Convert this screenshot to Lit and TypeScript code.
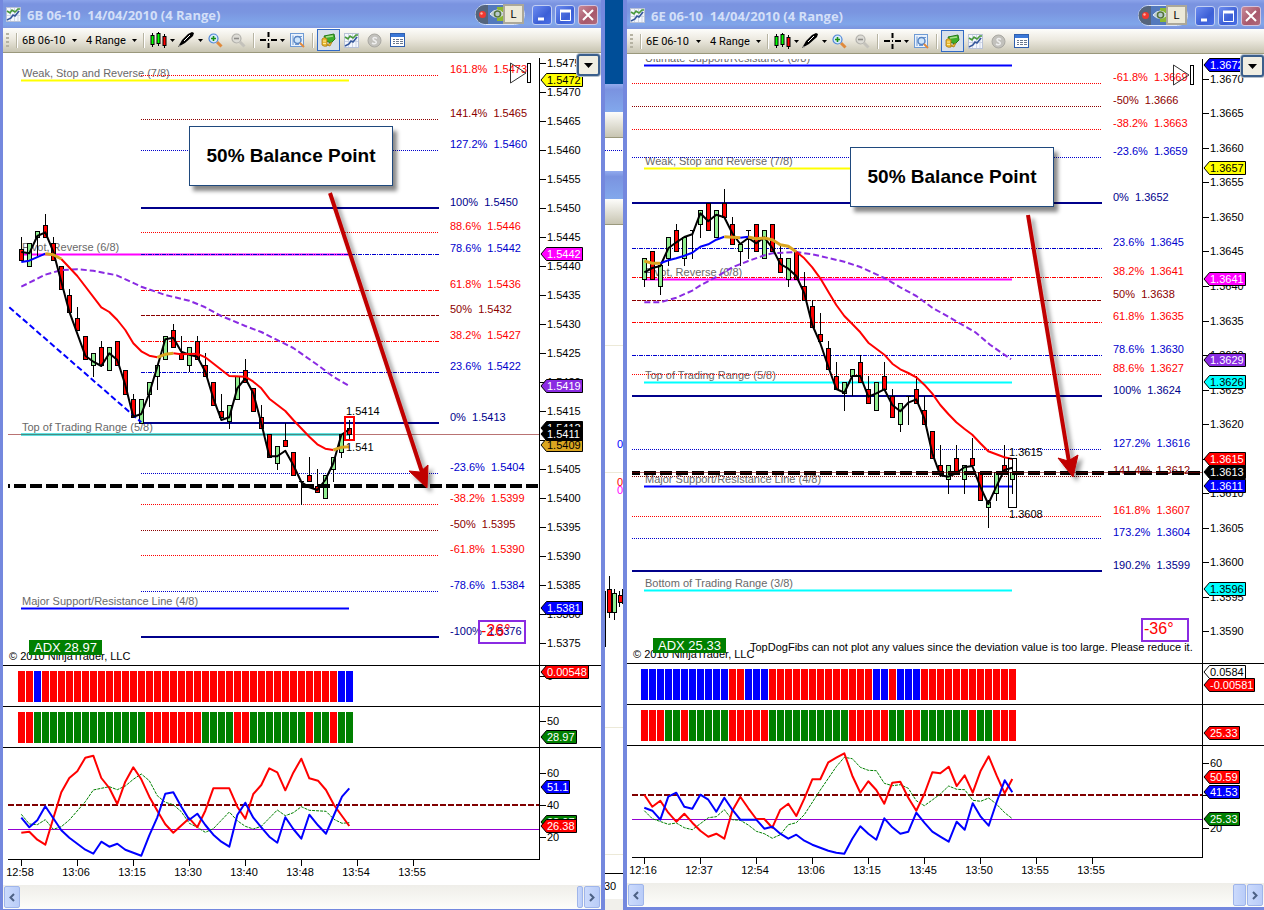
import { LitElement, html, svg, css, nothing, type SVGTemplateResult } from "lit";
import { customElement, property } from "lit/decorators.js";
import { styleMap } from "lit/directives/style-map.js";

type Pt = [number, number];
/** x, high, body top, body bottom, low, kind: g = up, r = down, d = doji */
type Candle = [number, number, number, number, number, "g" | "r" | "d"];
/** y, text, line style, colour */
type Level = [number, string, "dot" | "dashdot" | "dash" | "solid", string];
/** y, text, colour */
type Zone = [number, string, string];
/** y, text, fill, ink */
type Tag = [number, string, string, string];
type Tick = [number, string];
/** colour, points, kind */
type Curve = [string, Pt[], "line" | "thick" | "dashed" | "fine"];

interface Market {
  symbol: string;
  title: string;
  /** left edge of the chart and top of the price pane, in chart space */
  origin: Pt;
  split: [number, number, number, number, number];
  /** origin of the samples, which are recorded at three units a pixel */
  sample: Pt;
  oscSample: Pt;
  levelsFrom: number;
  levelsTo: number;
  labelsAt: number;
  levels: Level[];
  zonesFrom: number;
  zonesTo: number;
  zones: Zone[];
  candles: Candle[];
  curves: Curve[];
  extras: SVGTemplateResult;
  overlay: SVGTemplateResult;
  ticks: Tick[];
  tags: Tag[];
  barsFrom: number;
  trend: string;
  power: string;
  trendTicks: Tick[];
  trendTags: Tag[];
  powerTicks: Tick[];
  powerTags: Tag[];
  osc: Curve[];
  upper: number;
  lower: number;
  oscTicks: Tick[];
  oscTags: Tag[];
  timesAt: number;
  times: string[];
  adx: string;
  adxAt: Pt;
  angle: string;
  angleAt: Pt;
  note: string;
  noteAt: Pt;
  callout: Pt;
  arrow: string;
  arrowHead: string;
  skipAt: Pt;
}

const pts = (...n: number[]): Pt[] => {
  const out: Pt[] = [];
  for (let i = 0; i < n.length; i += 2) out.push([n[i], n[i + 1]]);
  return out;
};

const RED = "#ff0000";
const GOLD = "#daa520";
const NAVY = "#00008b";
const BLUE = "#0000ff";
const MIDBLUE = "#0000cd";
const MAROON = "#8b0000";
const VIOLET = "#8a2be2";
const GREEN = "#008000";

const priceTicks = (first: number, step: number, count: number, y0: number, dy: number): Tick[] =>
  Array.from({ length: count }, (_, i) => [Math.floor(y0 + i * dy), ((first - i * step) / 10000).toFixed(4)]);

const pound: Market = {
  symbol: "6B 06-10",
  title: "6B 06-10\u00a0\u00a014/04/2010 (4 Range)",
  origin: [3, 53],
  split: [53, 666, 707, 748, 860],
  sample: [0, 190],
  oscSample: [0, 570],
  levelsFrom: 141,
  levelsTo: 439,
  labelsAt: 450,
  levels: [
    [75, "161.8%  1.5473", "dot", RED],
    [119, "141.4%  1.5465", "dot", MAROON],
    [150, "127.2%  1.5460", "dot", MIDBLUE],
    [208, "100%  1.5450", "solid", NAVY],
    [232, "88.6%  1.5446", "dot", RED],
    [254, "78.6%  1.5442", "dashdot", MIDBLUE],
    [290, "61.8%  1.5436", "dashdot", RED],
    [315, "50%  1.5432", "dash", MAROON],
    [341, "38.2%  1.5427", "dashdot", RED],
    [372, "23.6%  1.5422", "dashdot", MIDBLUE],
    [423, "0%  1.5413", "solid", NAVY],
    [473, "-23.6%  1.5404", "dot", MIDBLUE],
    [504, "-38.2%  1.5399", "dot", RED],
    [530, "-50%  1.5395", "dot", MAROON],
    [555, "-61.8%  1.5390", "dot", RED],
    [591, "-78.6%  1.5384", "dot", MIDBLUE],
    [637, "-100%  1.5376", "solid", NAVY],
  ],
  zonesFrom: 21,
  zonesTo: 349,
  zones: [
    [80, "Weak, Stop and Reverse (7/8)", "#ffff00"],
    [254, "Pivot, Reverse (6/8)", "#ff00ff"],
    [434, "Top of Trading Range (5/8)", "#40e0e0"],
    [608, "Major Support/Resistance Line (4/8)", BLUE],
  ],
  candles: [
    [64, 141, 178, 212, 212, "r"], [88, 160, 160, 230, 230, "g"], [112, 124, 124, 142, 195, "g"], [136, 72, 106, 142, 142, "r"],
    [160, 142, 160, 212, 212, "r"], [184, 229, 229, 298, 298, "r"], [208, 297, 316, 368, 368, "r"], [232, 351, 385, 422, 422, "r"],
    [256, 439, 439, 508, 508, "r"], [280, 490, 490, 526, 560, "g"], [304, 453, 472, 526, 526, "r"], [328, 472, 472, 542, 542, "g"],
    [352, 454, 454, 526, 526, "r"], [376, 541, 541, 613, 613, "r"], [400, 612, 628, 682, 682, "r"], [424, 628, 628, 700, 700, "g"],
    [448, 577, 577, 613, 648, "g"], [472, 526, 526, 560, 597, "g"], [496, 439, 439, 508, 508, "g"], [520, 402, 421, 472, 472, "r"],
    [544, 438, 490, 508, 508, "r"], [568, 472, 472, 526, 543, "g"], [592, 438, 454, 508, 508, "r"], [616, 490, 526, 560, 560, "r"],
    [640, 577, 577, 647, 647, "r"], [664, 612, 664, 682, 682, "r"], [688, 646, 646, 694, 716, "g"], [712, 560, 560, 628, 628, "g"],
    [736, 507, 541, 577, 577, "r"], [760, 595, 595, 664, 664, "r"], [784, 646, 682, 716, 716, "r"], [808, 733, 733, 802, 802, "r"],
    [832, 769, 769, 820, 838, "g"], [856, 700, 751, 769, 769, "r"], [880, 787, 787, 856, 856, "r"], [904, 874, 874, 874, 942, "d"],
    [928, 801, 856, 874, 874, "r"], [952, 838, 889, 907, 907, "r"], [976, 856, 856, 925, 925, "g"], [1000, 802, 802, 838, 874, "g"],
    [1024, 733, 733, 787, 802, "g"], [1048, 690, 715, 733, 748, "r"],
  ],
  curves: [
    [VIOLET, pts(64, 290, 136, 254, 184, 240, 232, 238, 280, 242, 350, 256, 424, 290, 496, 315, 568, 332, 612, 350, 664, 378, 736, 408, 784, 426, 880, 474, 952, 524, 1000, 560, 1048, 588), "dashed"],
    [BLUE, pts(28, 352, 424, 697), "dashed"],
    ["#000000", pts(64, 186, 88, 190, 112, 138, 136, 127, 160, 185, 184, 275, 208, 365, 256, 497, 280, 515, 304, 528, 328, 490, 352, 510, 376, 585, 400, 680, 424, 672, 448, 610, 472, 530, 496, 448, 520, 443, 544, 485, 568, 494, 592, 500, 616, 545, 640, 625, 664, 690, 688, 682, 712, 595, 736, 565, 760, 610, 784, 700, 808, 799, 832, 799, 856, 782, 880, 825, 904, 876, 928, 892, 952, 900, 976, 870, 1000, 820, 1024, 735, 1048, 718), "line"],
    [BLUE, pts(64, 216, 88, 212, 136, 191), "line"],
    [RED, pts(184, 207, 232, 258, 304, 352, 328, 366, 352, 390, 376, 420, 400, 460, 424, 484, 448, 497, 472, 502), "line"],
    [RED, pts(520, 490, 544, 493, 592, 491, 616, 502, 688, 558, 736, 560, 760, 575, 784, 595, 808, 626, 856, 663, 880, 690, 928, 740, 952, 763, 976, 776, 1000, 780), "line"],
    [GOLD, pts(136, 191, 160, 194, 184, 207), "thick"],
    [GOLD, pts(472, 502, 496, 493, 520, 490), "thick"],
    [GOLD, pts(1000, 780, 1024, 772, 1048, 770), "thick"],
  ],
  extras: svg`<path d="M8 434.5H900" stroke="#800000" stroke-opacity=".55"/>
    <path d="M21 434.5H349" stroke="#60e0e0" stroke-width="3"/><path d="M21 434.5H349" stroke="#4a8a80"/>`,
  overlay: svg`
    <rect x="345" y="417" width="9" height="23" fill="none" stroke="#ff0000" stroke-width="2"/>
    <text x="346" y="415">1.5414</text><text x="346" y="451">1.541</text>
    <path d="M8 486H900" stroke="#000" stroke-width="4" stroke-dasharray="12 4" stroke-dashoffset="10"/>`,
  ticks: priceTicks(15475, 5, 21, 63.5, 29),
  tags: [
    [80, "1.5472", "#ffff00", "#000"],
    [254, "1.5442", "#ff00ff", "#fff"],
    [386, "1.5419", VIOLET, "#fff"],
    [445, "1.5409", GOLD, "#000"],
    [428, "1.5412", "#000", "#fff"],
    [434, "1.5411", "#000", "#fff"],
    [608, "1.5381", BLUE, "#fff"],
  ],
  barsFrom: 18,
  trend: "rrb" + "r".repeat(37) + "bb",
  power: "rr" + "g".repeat(14) + "r".repeat(7) + "ggggrr" + "g".repeat(7) + "rggrgg",
  trendTicks: [[676, "0"]],
  trendTags: [[672, "0.00548", RED, "#fff"]],
  powerTicks: [[721, "50"]],
  powerTags: [[737, "28.97", GREEN, "#fff"]],
  osc: [
    [GREEN, pts(64, 733, 88, 762, 112, 764, 136, 749, 160, 778, 184, 770, 208, 750, 256, 695, 280, 660, 304, 655, 328, 650, 352, 659, 376, 648, 400, 628, 424, 612, 448, 632, 472, 677, 496, 697, 520, 704, 544, 725, 568, 760, 592, 772, 616, 787, 640, 776, 688, 726, 712, 752, 736, 769, 760, 777, 784, 769, 832, 720, 856, 737, 880, 728, 904, 710, 928, 721, 978, 724, 1002, 748, 1026, 760, 1048, 758), "fine"],
    [RED, pts(64, 788, 88, 785, 112, 809, 136, 824, 160, 745, 184, 667, 208, 624, 232, 604, 256, 563, 280, 557, 304, 624, 328, 654, 352, 702, 376, 635, 400, 592, 424, 628, 448, 680, 472, 722, 496, 763, 520, 788, 568, 745, 592, 772, 616, 722, 640, 655, 688, 655, 712, 710, 736, 746, 760, 672, 784, 645, 808, 595, 832, 607, 856, 661, 880, 608, 904, 566, 928, 625, 954, 632, 978, 660, 1002, 705, 1026, 738, 1048, 768), "line"],
    [BLUE, pts(64, 743, 88, 772, 112, 751, 136, 709, 160, 745, 184, 781, 208, 803, 232, 821, 256, 839, 280, 851, 304, 815, 328, 830, 352, 821, 376, 839, 400, 848, 424, 857, 448, 796, 472, 742, 496, 671, 520, 667, 544, 710, 568, 749, 592, 731, 616, 765, 640, 794, 664, 815, 688, 830, 712, 735, 736, 698, 760, 743, 784, 772, 808, 800, 832, 818, 856, 742, 880, 777, 904, 806, 928, 734, 954, 766, 978, 791, 1002, 735, 1026, 680, 1048, 655), "line"],
  ],
  upper: 805,
  lower: 829.5,
  oscTicks: [[773, "60"], [805, "40"], [837, "20"]],
  oscTags: [
    [787, "51.1", BLUE, "#fff"],
    [822, "28.97", GREEN, "#fff"],
    [826, "26.38", RED, "#fff"],
  ],
  timesAt: 21,
  times: ["12:58", "13:06", "13:15", "13:30", "13:40", "13:48", "13:54", "13:55"],
  adx: "ADX 28.97",
  adxAt: [29, 640],
  angle: "-26°",
  angleAt: [479, 621],
  note: "",
  noteAt: [0, 0],
  callout: [189, 126],
  arrow: "M330 193L422 472",
  arrowHead: "M427 488L409 471L420 472L428 465Z",
  skipAt: [510, 63],
};

/** vertical shift of the later samples of the euro series */
const Z = 510;
const euro: Market = {
  symbol: "6E 06-10",
  title: "6E 06-10\u00a0\u00a014/04/2010 (4 Range)",
  origin: [627, 54],
  split: [54, 664, 705, 746, 858],
  sample: [620, 170],
  oscSample: [620, 570],
  levelsFrom: 632,
  levelsTo: 1102,
  labelsAt: 1113,
  levels: [
    [83, "-61.8%  1.3669", "dot", RED],
    [106, "-50%  1.3666", "dot", MAROON],
    [129, "-38.2%  1.3663", "dot", RED],
    [157, "-23.6%  1.3659", "dot", MIDBLUE],
    [203, "0%  1.3652", "solid", NAVY],
    [248, "23.6%  1.3645", "dashdot", MIDBLUE],
    [277, "38.2%  1.3641", "dashdot", RED],
    [300, "50%  1.3638", "dash", MAROON],
    [322, "61.8%  1.3635", "dashdot", RED],
    [355, "78.6%  1.3630", "dashdot", MIDBLUE],
    [374, "88.6%  1.3627", "dot", RED],
    [396, "100%  1.3624", "solid", NAVY],
    [449, "127.2%  1.3616", "dot", MIDBLUE],
    [476, "141.4%  1.3612", "dot", MAROON],
    [516, "161.8%  1.3607", "dot", RED],
    [538, "173.2%  1.3604", "dot", MIDBLUE],
    [571, "190.2%  1.3599", "solid", NAVY],
  ],
  zonesFrom: 644,
  zonesTo: 1012,
  zones: [
    [65, "Ultimate Support/Resistance (8/8)", BLUE],
    [168, "Weak, Stop and Reverse (7/8)", "#ffff00"],
    [279, "Pivot, Reverse (6/8)", "#ff00ff"],
    [382, "Top of Trading Range (5/8)", "#00ffff"],
    [486, "Major Support/Resistance Line (4/8)", BLUE],
    [590, "Bottom of Trading Range (3/8)", "#00ffff"],
  ],
  candles: [
    [73, 265, 265, 328, 350, "g"], [97, 244, 244, 328, 328, "r"], [121, 286, 286, 349, 372, "g"], [145, 202, 202, 265, 287, "g"],
    [169, 162, 181, 244, 244, "r"], [193, 202, 202, 265, 287, "g"], [217, 181, 181, 181, 265, "d"], [241, 121, 121, 163, 203, "g"],
    [265, 100, 100, 181, 181, "r"], [289, 121, 121, 202, 202, "g"], [313, 57, 100, 142, 142, "r"], [337, 141, 163, 223, 223, "r"],
    [361, 223, 223, 244, 285, "g"], [385, 181, 181, 181, 266, "d"], [409, 163, 163, 244, 244, "r"], [433, 181, 181, 265, 265, "g"],
    [457, 163, 163, 244, 244, "r"], [481, 230, 265, 307, 307, "r"], [505, 265, 265, 328, 350, "g"], [529, 246, 246, 328, 328, "r"],
    [553, 307, 349, 391, 391, "r"], [577, 392, 409, 472, 472, "r"], [601, 430, 493, 514, 514, "r"], [625, 514, 535, 598, 598, "r"],
    [649, 577, 619, 658, 658, "r"], [673, 637, 637, 670, 722, "g"], [697, 598, 598, 619, 676, "g"], [721, 556, 577, 637, 637, "r"],
    [745, 618, 658, 700, 700, "r"], [769, 637, 637, 721, 721, "g"], [793, 577, 619, 658, 658, "r"], [817, 658, 679, 742, 742, "r"],
    [841, 700, 700, 763, 784, "g"], [865, 679, 679, 679, 763, "d"], [889, 618, 658, 700, 700, "r"], [913, 679, 721, 763, 763, "r"],
    [937, 784, 784, 865, 865, "r"], [961, 826, 886, 907, 918, "r"], [985, 886, 886, 928, 971, "g"], [1009, 826, 865, 907, 907, "r"],
    [1033, 886, 886, 928, 971, "g"], [1057, 804, 865, 886, 886, "r"], [1081, 907, 907, 991, 991, "r"], [1105, 990, 997, 1012, 1072, "g"],
    [1129, 907, 907, 970, 992, "g"], [1153, 826, 886, 910, 910, "r"], [1177, 865, 907, 928, 970, "g"],
  ],
  curves: [
    [VIOLET, pts(73, 397, 121, 397, 169, 383, 217, 362, 241, 346, 289, 321, 337, 292, 385, 273, 433, 256, 457, 250, 529, 246, 577, 253, 625, 264, 673, 275, 721, 291, 793, 324, 841, 352, 889, 378, 937, 413, 1009, 454, 1065, 486, 1110, 524, 1173, 568), "dashed"],
    ["#000000", pts(73, 307, 97, 294, 121, 288, 145, 235, 169, 217, 193, 201, 217, 193, 241, 130, 265, 154, 289, 134, 313, 142, 337, 190, 361, 222, 385, 204, 409, 220, 433, 202, 457, 234, 481, 282, 505, 296, 529, 318, 553, 370, 577, 465, 601, 520, 625, 590, 649, 657, 673, 668, 697, 618, 721, 618, 745, 680, 769, 670, 793, 658, 817, Z + 195, 841, Z + 214, 865, Z + 188, 889, Z + 178, 913, Z + 235, 937, Z + 340, 961, Z + 406, 985, Z + 410, 1009, Z + 400, 1033, Z + 382, 1057, Z + 378, 1081, Z + 440, 1105, Z + 492, 1129, Z + 440, 1153, Z + 390, 1177, Z + 383), "line"],
    [BLUE, pts(121, 280, 145, 271, 169, 265, 193, 257, 217, 248, 241, 230, 265, 223, 289, 209, 313, 200), "line"],
    [RED, pts(529, 245, 553, 265, 577, 292, 601, 325, 625, 365, 649, 405, 673, 438, 697, 462, 721, 487, 745, 518, 769, 536, 793, 554, 817, 581, 841, 598, 865, 609, 889, 622, 913, Z + 134, 937, Z + 161, 961, Z + 195, 985, Z + 222, 1009, Z + 247, 1033, Z + 266, 1057, Z + 284, 1081, Z + 310, 1105, Z + 334, 1129, Z + 343, 1153, Z + 352, 1177, Z + 357), "line"],
    [GOLD, pts(73, 273, 97, 280, 121, 280), "thick"],
    [GOLD, pts(313, 200, 361, 203), "thick"],
    [BLUE, pts(361, 203, 385, 200), "line"],
    [GOLD, pts(385, 201, 409, 206, 433, 204, 457, 209, 481, 224, 505, 229, 529, 245), "thick"],
  ],
  extras: svg`<rect x="627" y="54" width="480" height="5" fill="#fff"/>`,
  overlay: svg`
    <rect x="1008.5" y="458.5" width="8" height="49" fill="none" stroke="#000"/>
    <text x="1009" y="456">1.3615</text><text x="1009" y="518">1.3608</text>
    <path d="M632 473H1800" stroke="#000" stroke-width="4" stroke-dasharray="12 4" stroke-dashoffset="4"/>
    <path d="M632 472.5H1800" stroke="#800000" stroke-opacity=".6"/>`,
  ticks: priceTicks(13670, 5, 17, 79.3, 34.53),
  tags: [
    [65, "1.3672", BLUE, "#fff"],
    [168, "1.3657", "#ffff00", "#000"],
    [279, "1.3641", "#ff00ff", "#fff"],
    [360, "1.3629", VIOLET, "#fff"],
    [382, "1.3626", "#00ffff", "#000"],
    [459, "1.3615", RED, "#fff"],
    [486, "1.3611", BLUE, "#fff"],
    [472, "1.3613", "#000", "#fff"],
    [589, "1.3596", "#00ffff", "#000"],
  ],
  barsFrom: 641,
  trend: "b".repeat(11) + "rrbbb" + "r".repeat(13) + "bbrbbb" + "r".repeat(12),
  power: "rrrggr" + "ggggg" + "rrrrr" + "g".repeat(10) + "rrrrrggrr" + "g".repeat(6) + "rggrrr",
  trendTicks: [],
  trendTags: [[672, "0.0584", "#fff", "#000"], [685, "-0.00581", RED, "#fff"]],
  powerTicks: [],
  powerTags: [[733, "25.33", RED, "#fff"]],
  osc: [
    [GREEN, pts(73, 722, 97, 746, 145, 763, 169, 759, 193, 773, 217, 779, 265, 743, 289, 740, 313, 719, 337, 749, 361, 751, 385, 765, 409, 784, 433, 791, 457, 805, 481, 794, 505, 764, 529, 758, 553, 734, 601, 660, 649, 590, 673, 562, 697, 566, 721, 592, 745, 601, 769, 602, 793, 640, 817, 647, 841, 644, 865, 655, 889, 692, 913, 707, 937, 690, 961, 672, 986, 648, 1010, 658, 1034, 659, 1058, 691, 1082, 694, 1106, 684, 1130, 703, 1154, 728, 1177, 746), "fine"],
    [RED, pts(73, 674, 97, 710, 121, 692, 145, 728, 169, 755, 193, 731, 217, 758, 241, 782, 265, 800, 289, 791, 313, 806, 337, 722, 361, 680, 385, 715, 409, 747, 433, 747, 457, 773, 481, 719, 505, 701, 529, 738, 553, 686, 577, 628, 601, 628, 625, 577, 649, 563, 673, 550, 697, 617, 721, 668, 745, 634, 769, 660, 793, 701, 817, 638, 841, 635, 865, 683, 889, 722, 913, 672, 937, 607, 961, 610, 986, 590, 1010, 648, 1034, 616, 1058, 668, 1082, 602, 1106, 559, 1130, 617, 1154, 670, 1177, 627), "line"],
    [BLUE, pts(73, 713, 97, 722, 121, 749, 145, 680, 169, 668, 193, 710, 217, 716, 241, 674, 265, 689, 289, 725, 313, 683, 337, 719, 361, 749, 409, 749, 433, 776, 457, 770, 481, 791, 505, 806, 529, 794, 553, 812, 577, 824, 625, 842, 649, 848, 673, 851, 697, 806, 721, 769, 745, 791, 769, 809, 793, 745, 817, 772, 841, 791, 865, 785, 889, 728, 913, 758, 937, 785, 961, 800, 986, 815, 1010, 755, 1034, 779, 1058, 700, 1082, 740, 1106, 767, 1130, 696, 1154, 631, 1177, 667), "line"],
  ],
  upper: 795,
  lower: 819.5,
  oscTicks: [[763, "60"], [795, "40"], [828, "20"]],
  oscTags: [
    [777, "50.59", RED, "#fff"],
    [792, "41.53", BLUE, "#fff"],
    [819, "25.33", GREEN, "#fff"],
  ],
  timesAt: 644,
  times: ["12:16", "12:37", "12:54", "13:06", "13:15", "13:45", "13:50", "13:55", "13:55"],
  adx: "ADX 25.33",
  adxAt: [653, 638],
  angle: "-36°",
  angleAt: [1142, 619],
  note: "TopDogFibs can not plot any values since the deviation value is too large. Please reduce it.",
  noteAt: [750, 651],
  callout: [850, 147],
  arrow: "M1028 215L1069 462",
  arrowHead: "M1073 477L1058 458L1068 461L1078 455Z",
  skipAt: [1173, 65],
};

const DASHES = { dot: "1 1", dashdot: "4 1 1 1", dash: "4 1", solid: "none" };

const tagWidth = (s: string) =>
  Math.round([...s].reduce((w, c) => w + (c === "." ? 3.06 : c === "-" ? 3.66 : 6.12), 0));

const drawTag = ([y, label, fill, ink]: Tag) => {
  const right = 9.5 + tagWidth(label);
  return svg`<path d="M2 ${y}L7.5 ${y - 6.5}H${right}V${y + 6.5}H7.5Z" fill=${fill} stroke="#000"/>
    <text x="8" y=${y + 4} fill=${ink}>${label}</text>`;
};

const drawTick = ([y, label]: Tick) =>
  svg`<path d="M1 ${y + 0.5}H7" stroke="#000"/><text x="8" y=${y + 4}>${label}</text>`;

const drawCurve = ([color, points, kind]: Curve, [ox, oy]: Pt) => svg`<polyline
  points=${points.map(([x, y]) => `${(ox + x / 3).toFixed(1)},${(oy + y / 3).toFixed(1)}`).join(" ")}
  fill="none" stroke=${color} stroke-linejoin="round"
  stroke-width=${kind === "fine" ? 1 : kind === "thick" ? 3 : 2}
  stroke-dasharray=${kind === "dashed" ? "6 3" : kind === "fine" ? "3 1" : "none"} />`;

const drawCandle = ([x, hi, top, bottom, lo, kind]: Candle, [ox, oy]: Pt) => {
  const cx = ox + Math.floor(x / 3);
  const y = (v: number) => Math.floor(oy + v / 3);
  const wick = svg`<path d="M${cx + 0.5} ${y(hi)}V${y(lo) + 1}" stroke="#000"/>`;
  return kind === "d"
    ? svg`${wick}<path d="M${cx - 2} ${y(top) + 0.5}H${cx + 3}" stroke="#000"/>`
    : svg`${wick}<rect x=${cx - 1.5} y=${y(top) + 0.5} width="4" height=${Math.max(2, y(bottom) - y(top))}
        fill=${kind === "g" ? "#90ee90" : RED} stroke="#000"/>`;
};

const drawBars = (code: string, from: number, top: number) =>
  [...code].map((c, i) => svg`<rect x=${from + i * 8} y=${top} width="7" height="31"
    fill=${c === "r" ? RED : c === "b" ? BLUE : GREEN}/>`);

const chartIcon = html`<svg width="15" height="15" viewBox="0 0 15 15" aria-hidden="true">
  <rect x=".5" y=".5" width="14" height="14" fill="#f4f7fd" stroke="#b9c2d6"/>
  <path d="M1 4.5H14M1 8.5H14M4.5 1V14M8.5 1V14M12 1V14" stroke="#cdd5e6"/>
  <path d="M1 4L4 6L6 3L9 5L12 2L14 2" fill="none" stroke="#4a9a3c" stroke-width="1.6"/>
  <path d="M1 13L5 11L7 8L9 9L13 4" fill="none" stroke="#36589c" stroke-width="1.6"/></svg>`;
const caret = html`<svg class="caret" width="5" height="3" viewBox="0 0 5 3" aria-hidden="true"><path d="M0 0H5L2.5 3Z"/></svg>`;

@customElement("chart-window")
export class ChartWindow extends LitElement {
  @property({ attribute: false }) market!: Market;

  static styles = css`
    :host { display: flex; flex-direction: column; min-width: 0; box-sizing: border-box;
      border: solid #7488de; border-width: 0 4px 1px 3px; background: #fff;
      font: 11px/13px "Liberation Sans", Arial, sans-serif; color: #000; overflow: hidden; }
    :host([side="right"]) { border-width: 0 0 3px 4px; }
    svg { display: block; flex: none; }
    button { font: inherit; padding: 0; margin: 0; border: 0; background: none; color: inherit; }
    .title { display: flex; align-items: center; gap: 6px; height: 28px; box-sizing: border-box;
      margin: 0 -4px 0 -3px; padding: 1px 7px 0 6px;
      background: linear-gradient(#8ba3ea 0, #7a93e0 4px, #7a95e0 12px, #80a6ea 24px, #7d97e0 28px); }
    :host([side="right"]) .title { height: 29px; margin: 0 0 0 -4px; padding: 2px 3px 0 7px; }
    h1 { flex: 1; min-width: 0; margin: 0; font: 700 13px/18px "Open Sans", "Noto Sans", sans-serif; color: #d3dff8;
      white-space: nowrap; overflow: hidden; }
    .badge { display: flex; align-items: center; position: relative; }
    .lang { position: absolute; left: 28px; top: 0; width: 21px; height: 20px; box-sizing: border-box;
      border: 2px solid #aca899; background: #ece9d8; text-align: center; line-height: 17px; }
    .controls { display: flex; gap: 3px; }
    .controls button { width: 20px; height: 20px; border: 1px solid #c3d0f3; border-radius: 3px; display: grid; place-items: center;
      background: linear-gradient(135deg, #6d8df0, #3c5fd6 60%, #4a6fe6); }
    .controls .close { background: linear-gradient(135deg, #c98a98, #a8586c 60%, #b06a7c); border-color: #d3c3dd; }
    .bar { display: flex; align-items: center; height: 25px; box-sizing: border-box; padding: 0 0 0 3px; overflow: hidden;
      background: linear-gradient(#fdfdfb, #ece9df 45%, #c8c5b2); border-bottom: 1px solid #9a987c;
      font: 11px/13px Roboto, Tahoma, sans-serif; }
    .grip { width: 3px; height: 15px; margin-right: 4px; background: repeating-linear-gradient(#b5b2a2 0 2px, transparent 2px 4px); }
    .rule { width: 1px; height: 15px; margin: 0 3px; background: #b7b4a2; border-right: 1px solid #fff; flex: none; }
    .pick { display: flex; align-items: center; position: relative; margin-left: 1px; }
    .pick .caret { position: absolute; right: 0; pointer-events: none; }
    select { appearance: none; border: 0; background: none; font: inherit; color: inherit; padding: 0; margin: 0; height: 17px; width: 55px; }
    .period { margin: 0 3px 0 9px; }
    .period select { width: 51px; }
    .tool { display: flex; align-items: center; justify-content: center; width: 23px; height: 22px; flex: none; box-sizing: border-box; }
    .wide { width: 28px; gap: 3px; }
    .on { border: 1px solid #316ac5; background: #d8e0ea; }
    .chart { position: relative; flex: 1; background: #fff; }
    .pane { display: flex; }
    .ruled { border-bottom: 1px solid #000; }
    .plot { flex: 1; min-width: 0; width: 0; }
    text { white-space: pre; }
    .zone { fill: #696969; }
    .adx { font-size: 13px; fill: #fff; }
    .angle { font-size: 16px; fill: #f00; }
    .over { position: absolute; inset: 0; width: 100%; height: 100%; pointer-events: none; }
    .callout { position: absolute; left: var(--x); top: var(--y); width: 204px; height: 60px; box-sizing: border-box; margin: 0;
      border: 1px solid #1f497d; background: #fff; display: grid; place-items: center; box-shadow: 4px 5px 4px #0007;
      font: bold 19px/22px "Liberation Sans", Arial, sans-serif; white-space: nowrap; }
    .menu { position: absolute; right: 1px; top: 1px; width: 23px; height: 22px; display: grid; place-items: center;
      border: 2px solid #3b5f8c; border-radius: 3px; background: #f0eee2; box-shadow: 0 0 0 1px #b5c0cc; }
    :host([side="right"]) .menu { right: 0; }
    .scroll { display: flex; align-items: center; gap: 1px; height: 24px; padding: 0 1px; background: linear-gradient(#efeee9, #fdfdfa); }
    .track { flex: 1; }
    .thumb, .step { height: 22px; box-sizing: border-box; border: 1px solid #9fb5ea; border-radius: 2px;
      background: linear-gradient(90deg, #cbdafc, #b9ccf8); display: grid; place-items: center; }
    .step { width: 16px; }
    .thumb { width: 6px; }
    :host([side="right"]) .thumb { width: 13px; }
  `;

  private axis(top: number, height: number, ticks: Tick[], tags: Tag[], lineFrom = top) {
    const lineTo = top + height;
    return html`<svg width="62" height=${height} fill="#000">
      <g transform="translate(0 ${-top})">
        <path d="M.5 ${lineFrom}V${lineTo}" stroke="#000"/>
        ${ticks.map(drawTick)}${tags.map(drawTag)}
      </g></svg>`;
  }

  private pricePlot(m: Market, height: number) {
    const [ox, top] = m.origin;
    const [ax, ay] = m.adxAt;
    const [gx, gy] = m.angleAt;
    const [sx, sy] = m.skipAt;
    const base = m.split[1];
    return html`<svg class="plot" height=${height}>
      <g transform="translate(${-ox} ${-top})">
        ${m.zones.map(([y, label, color]) => svg`
          <text class="zone" x=${m.zonesFrom + 1} y=${y - 3}>${label}</text>
          <path d="M${m.zonesFrom} ${y + 0.5}H${m.zonesTo}" stroke=${color} stroke-width="2"/>`)}
        ${m.extras}
        ${m.levels.map(([y, label, style, color]) => svg`
          <path d="M${m.levelsFrom} ${style === "solid" ? y : y + 0.5}H${m.levelsTo}" stroke=${color}
            stroke-width=${style === "solid" ? 2 : 1} stroke-dasharray=${DASHES[style]}/>
          <text x=${m.labelsAt} y=${y - 2} fill=${color}>${label}</text>`)}
        ${m.candles.map((c) => drawCandle(c, m.sample))}
        ${m.curves.map((c) => drawCurve(c, m.sample))}
        ${m.overlay}
        <path d="M${sx + 0.5} ${sy}V${sy + 20}L${sx + 16} ${sy + 10}Z" fill="none" stroke="#333"/>
        <rect x=${sx + 17.5} y=${sy + 0.5} width="3" height="19" fill="#fff" stroke="#000"/>
        <rect x=${gx} y=${gy} width="46" height="22" fill="none" stroke=${VIOLET} stroke-width="2"/>
        <text class="angle" x=${gx + 2} y=${gy + 15}>${m.angle}</text>
        <text x=${ox + 6} y=${base - 6}>© 2010 NinjaTrader, LLC</text>
        <rect x=${ax} y=${ay} width="73" height="15" fill=${GREEN}/>
        <text class="adx" x=${ax + 5} y=${ay + 12}>${m.adx}</text>
        ${m.note ? svg`<text x=${m.noteAt[0]} y=${m.noteAt[1]}>${m.note}</text>` : nothing}
      </g></svg>`;
  }

  render() {
    const m = this.market;
    const [ox] = m.origin;
    const [t0, t1, t2, t3, t4] = m.split;
    const shift = `translate(${-ox} 0)`;
    return html`
      <header class="title">
        ${chartIcon}
        <h1>${m.title}</h1>
        <div class="badge">
          <svg width="51" height="22" viewBox="0 0 51 22" aria-hidden="true">
            <rect x=".5" y=".5" width="49" height="20" rx="10" fill="#5379bd" stroke="#dde6f8"/>
            <path d="M13 1H10A9.5 9.5 0 0 0 10 20H13Z" fill="#55657c"/>
            <circle cx="7.5" cy="10.5" r="3.5" fill="#f03830"/><circle cx="6.5" cy="9.5" r="1.2" fill="#ffb0a0"/>
            <rect x="22" y="3" width="8" height="14" fill="#8cb832"/>
            <path d="M15 10Q22 2 29 10Q22 17 15 10Z" fill="#b9c9cd" stroke="#e6edf4"/>
            <circle cx="22.5" cy="10" r="3" fill="none" stroke="#54743c" stroke-width="1.5"/>
          </svg>
          <span class="lang">L</span>
        </div>
        <div class="controls">
          <button aria-label="Minimize"><svg width="14" height="14"><path d="M3 11H9" stroke="#fff" stroke-width="3"/></svg></button>
          <button aria-label="Maximize"><svg width="14" height="14"><path d="M2.5 3V12.5H12.5V3" fill="none" stroke="#fff"/><path d="M2 3H13" stroke="#fff" stroke-width="3"/></svg></button>
          <button class="close" aria-label="Close"><svg width="14" height="14"><path d="M2 2L12 12M12 2L2 12" stroke="#fff" stroke-width="2"/></svg></button>
        </div>
      </header>
      <div class="bar">
        <span class="grip"></span><span class="rule"></span>
        <label class="pick"><select aria-label="Instrument"><option>${m.symbol}</option></select>${caret}</label>
        <label class="pick period"><select aria-label="Period"><option>4 Range</option></select>${caret}</label>
        <span class="rule"></span>
        <button class="tool wide" aria-label="Chart style">
          <svg width="17" height="16" viewBox="0 0 17 16"><g stroke="#000"><path d="M2.5 1V15M8.5 0V14M14.5 2V16" stroke-width="1"/>
            <rect x="1" y="3.5" width="3" height="9" fill="#0f0"/><rect x="7" y="1.5" width="3" height="10" fill="#0f0"/><rect x="13" y="4.5" width="3" height="9" fill="#f00"/></g></svg>${caret}</button>
        <button class="tool wide" aria-label="Drawing tools">
          <svg width="17" height="16" viewBox="0 0 17 16"><path d="M0 15L4 8L10 2L14 0L16 1L15 4L7 11Z"/><path d="M6 9L12 3" stroke="#fff"/><path d="M1 13L3 14" stroke="#888"/></svg>${caret}</button>
        <button class="tool" aria-label="Zoom in">${this.lens("#e08a3c", "#4f86d8", "#d8ecfb", true)}</button>
        <button class="tool" aria-label="Zoom out" disabled>${this.lens("#c4c2bb", "#b2b1ac", "#dddcd6", false)}</button>
        <span class="rule"></span>
        <button class="tool wide" aria-label="Cross hair">
          <svg width="17" height="16" viewBox="0 0 17 16"><path d="M0 8H6M11 8H17M8.5 0V5M8.5 11V16" stroke="#000" stroke-width="2"/><rect x="8" y="7" width="1" height="2"/></svg>${caret}</button>
        <button class="tool" aria-label="Data box">
          <svg width="15" height="15" viewBox="0 0 15 15"><rect x=".5" y=".5" width="13" height="13" fill="#eaf2fc" stroke="#6f9bd4"/>
            <path d="M3 2.5V12M5 3.5H12M5 11.5H9" stroke="#6f9bd4"/><circle cx="7.5" cy="7" r="3.5" fill="#cfe6fb" stroke="#5a86c4" stroke-width="1.5"/><path d="M10 10L14 14" stroke="#e08a3c" stroke-width="2"/></svg></button>
        <span class="rule"></span>
        <button class="tool on" aria-label="Chart trader" aria-pressed="true">
          <svg width="15" height="15" viewBox="0 0 15 15"><path d="M3 3L13 1L14 6L10 10L5 8Z" fill="#3fae2a" stroke="#267a1c"/><path d="M5 4L12 3" stroke="#a8e08c" stroke-width="1.5"/>
            <path d="M1 6Q3 3 6 6V13Q3 14 1 12Z" fill="#e8b830" stroke="#a87814" stroke-width=".8"/><path d="M2 8H5M2 10.5H5" stroke="#fbe89a"/><path d="M6 12L11 9L9 13Z" fill="#f0c23a" stroke="#a87814" stroke-width=".8"/></svg></button>
        <button class="tool" aria-label="Indicators">${chartIcon}</button>
        <button class="tool" aria-label="Strategies" disabled>
          <svg width="15" height="15" viewBox="0 0 15 15"><circle cx="7.5" cy="7.5" r="6.5" fill="#c2c1bc" stroke="#a9a8a2"/><path d="M10 5.5Q7.5 3.5 6 5.5Q6 7 7.5 7.5Q10 8.5 9 10Q7.5 11.5 5 10" fill="none" stroke="#eee" stroke-width="1.5"/></svg></button>
        <button class="tool" aria-label="Properties">
          <svg width="15" height="14" viewBox="0 0 15 14"><rect x=".5" y=".5" width="14" height="13" fill="#fff" stroke="#2f5fae"/><rect x="1" y="1" width="13" height="3" fill="#3b78d8"/>
            <path d="M3 6.5H5M6 6.5H9M10 6.5H13M3 8.5H5M6 8.5H9M10 8.5H13M3 10.5H5M6 10.5H9M10 10.5H13" stroke="#6a7890"/></svg></button>
      </div>
      <main class="chart">
        <section class="pane ruled">
          ${this.pricePlot(m, t1 - t0 - 1)}
          ${this.axis(t0, t1 - t0 - 1, m.ticks, m.tags, t0 + 5)}
        </section>
        <section class="pane ruled">
          <svg class="plot" height=${t2 - t1 - 1}><g transform=${shift}>${drawBars(m.trend, m.barsFrom, 5)}</g></svg>
          ${this.axis(t1, t2 - t1 - 1, m.trendTicks, m.trendTags)}
        </section>
        <section class="pane ruled">
          <svg class="plot" height=${t3 - t2 - 1}><g transform=${shift}>${drawBars(m.power, m.barsFrom, 5)}</g></svg>
          ${this.axis(t2, t3 - t2 - 1, m.powerTicks, m.powerTags)}
        </section>
        <section class="pane">
          <svg class="plot" height=${t4 - t3}><g transform="translate(${-ox} ${-t3})">
            <path d="M${ox + 5} ${m.upper}H3000" stroke="#800000" stroke-width="2" stroke-dasharray="6 2"/>
            <path d="M${ox + 5} ${m.lower}H3000" stroke="#9400d3"/>
            ${m.osc.map((c) => drawCurve(c, m.oscSample))}
            <path d="M${ox + 5} ${t4 - 0.5}H3000" stroke="#000"/>
          </g></svg>
          ${this.axis(t3, t4 - t3, m.oscTicks, m.oscTags)}
        </section>
        <section class="pane">
          <svg class="plot" height="25" text-anchor="middle"><g transform=${shift}>
            ${m.times.map((t, i) => svg`<path d="M${m.timesAt + i * 56 + 0.5} 0V6" stroke="#000"/>
              <text x=${m.timesAt + i * 56 - 1} y="16">${t}</text>`)}
          </g></svg>
        </section>
        <p class="callout" style=${styleMap({ "--x": `${m.callout[0] - ox}px`, "--y": `${m.callout[1] - t0}px` })}>50% Balance Point</p>
        <svg class="over" aria-hidden="true">
          <defs><filter id="soft" x="-30%" y="-10%" width="160%" height="120%"><feDropShadow dx="4" dy="4" stdDeviation="2" flood-opacity=".4"/></filter></defs>
          <g transform="translate(${-ox} ${-t0})" filter="url(#soft)">
            <path d=${m.arrow} stroke="#c00000" stroke-width="4"/>
            <path d=${m.arrowHead} fill="#c00000" stroke="#c00000"/>
          </g></svg>
        <button class="menu" aria-label="Chart trader menu"><svg width="9" height="5"><path d="M0 0H9L4.5 5Z"/></svg></button>
      </main>
      <footer class="scroll">
        <button class="step" aria-label="Scroll left"><svg width="6" height="9"><path d="M5 1L1.5 4.5L5 8" fill="none" stroke="#4d6185" stroke-width="2"/></svg></button>
        <span class="track"></span><span class="thumb"></span>
        <button class="step" aria-label="Scroll right"><svg width="6" height="9"><path d="M1 1L4.5 4.5L1 8" fill="none" stroke="#4d6185" stroke-width="2"/></svg></button>
      </footer>`;
  }

  private lens(handle: string, rim: string, glass: string, plus: boolean) {
    return html`<svg width="15" height="15" viewBox="0 0 15 15"><path d="M9 9L13.5 13.5" stroke=${handle} stroke-width="3"/>
      <circle cx="5.5" cy="5.5" r="4.5" fill=${glass} stroke=${rim} stroke-width="1.2"/>
      <path d=${plus ? "M3 5.5H8M5.5 3V8" : "M3 5.5H8"} stroke=${plus ? "#189018" : "#8f8e8a"} stroke-width="1.6"/></svg>`;
  }
}

@customElement("app-root")
export class AppRoot extends LitElement {
  static styles = css`
    :host { display: grid; grid-template-columns: minmax(0, 605fr) minmax(0, 18fr) minmax(0, 641fr); align-items: stretch;
      background: #004e98; overflow: hidden; font: 11px/13px "Liberation Sans", Arial, sans-serif; }
    .behind { width: 100%; height: 100%; display: block; }
  `;

  render() {
    const bar = (y: number) => svg`
      <rect y=${y} width="100%" height="28" fill="url(#cap)"/>
      <rect y=${y + 28} width="100%" height="25" fill="url(#tools)"/>
      <path d="M0 ${y + 53.5}H60" stroke="#9a987c"/>`;
    return html`
      <chart-window .market=${pound}></chart-window>
      <svg class="behind" aria-hidden="true">
        <defs>
          <linearGradient id="cap" x2="0" y2="1"><stop stop-color="#92abee"/><stop offset=".2" stop-color="#7a93e0"/><stop offset="1" stop-color="#82a8ec"/></linearGradient>
          <linearGradient id="tools" x2="0" y2="1"><stop stop-color="#fdfdfb"/><stop offset="1" stop-color="#c8c5b2"/></linearGradient>
        </defs>
        <rect y="138" width="100%" height="800" fill="#fff"/>
        ${bar(84)}${bar(171)}
        <path d="M0 150.5H60" stroke="#0000cd" stroke-dasharray="1 1"/>
        <path d="M0 345.5H60M0 472.5H60M0 727.5H60M0 854.5H60" stroke="#ece9d8"/>
        <g transform="translate(-605 0)">
          <text x="617" y="448" fill="#00f">0</text><text x="617" y="486" fill="#f00">0</text><text x="617" y="494" fill="#f0f">0</text>
          <g stroke="#000"><path d="M609.5 576V618M614.5 589V620M619.5 591V607M622.5 589V604"/>
            <rect x="602.5" y="591.5" width="3" height="55" fill="#90ee90"/>
            <rect x="607.5" y="589.5" width="4" height="23" fill="#f00"/><rect x="612.5" y="593.5" width="4" height="19" fill="#90ee90"/>
            <rect x="618.5" y="595.5" width="4" height="7" fill="#f00"/><path d="M605 873.5H640"/></g>
          <text x="604" y="890">30</text>
        </g>
        <rect y="899" width="100%" height="40" fill="#f1f0eb"/>
      </svg>
      <chart-window side="right" .market=${euro}></chart-window>`;
  }
}
